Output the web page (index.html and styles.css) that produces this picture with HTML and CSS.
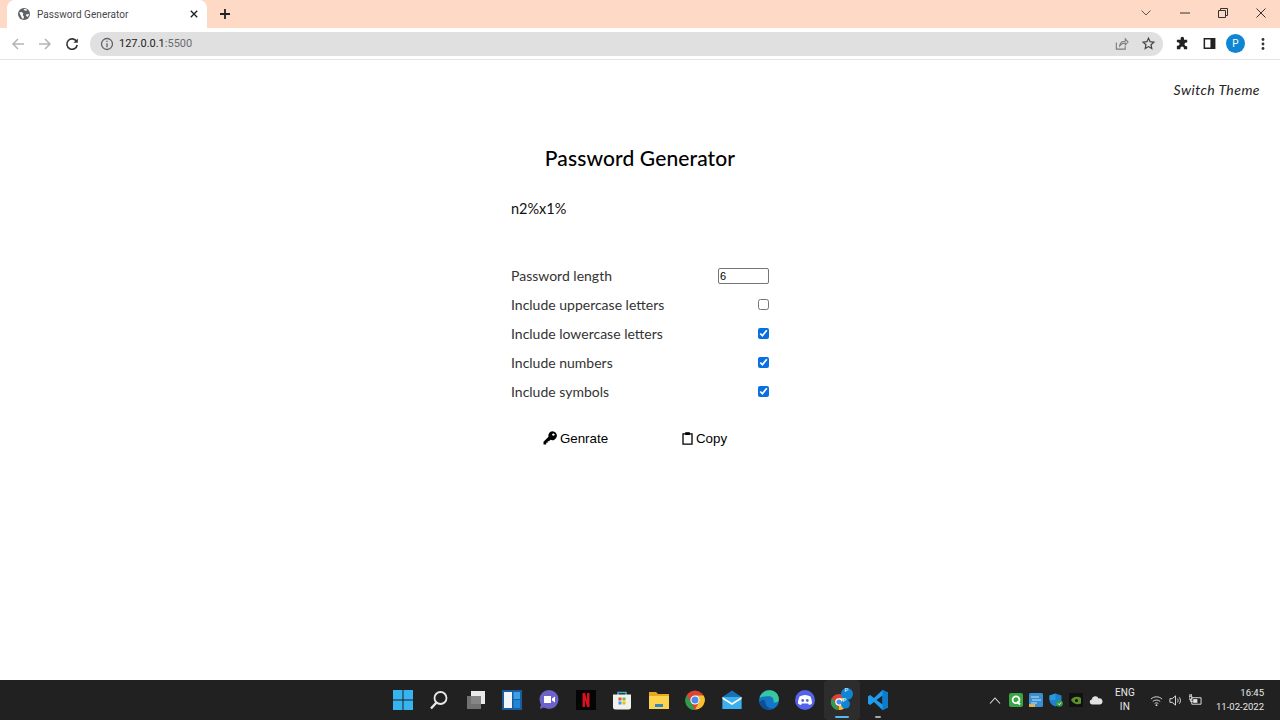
FILE: index.html
```html
<!DOCTYPE html>
<html lang="en">
<head>
<meta charset="utf-8">
<title>Password Generator</title>
<link rel="stylesheet" href="styles.css">
</head>
<body>
<div class="tabstrip">
  <div class="tab">
    <svg class="ic16" viewBox="0 0 16 16"><circle cx="8" cy="8" r="6" fill="#5f6368"/><path d="M3.200 6.500 5.800 6l1.500 1.500-.5 1.800 1 1v2.300L6 12.500l-1-2.500zM7.500 3l1.200 1.500 2 .3.400-1-1.600-.9zM10 8.500l2.600-.6.500.6-1.500 2.500-1.400-.9z" fill="#fff"/></svg>
    <span class="tabtitle">Password Generator</span>
    <svg class="tabclose" viewBox="0 0 10 10"><path d="M1 1l8 8M9 1l-8 8" stroke="#202124" stroke-width="1.700"/></svg>
  </div>
  <svg class="newtab" viewBox="0 0 12 12"><path d="M6 1v10M1 6h10" stroke="#202124" stroke-width="1.800"/></svg>
  <div class="winctl">
    <svg class="chev" viewBox="0 0 10 6"><path d="M.5.500 5 5 9.500.500" fill="none" stroke="#5f5550" stroke-width="1"/></svg>
    <svg class="wbtn" viewBox="0 0 10 10"><path d="M0 5h10" stroke="#333" stroke-width="1"/></svg>
    <svg class="wbtn" viewBox="0 0 10 10"><path d="M.5 2.500h7v7h-7zM2.500 2.500v-2h7v7h-2" fill="none" stroke="#333" stroke-width="1"/></svg>
    <svg class="wbtn" viewBox="0 0 10 10"><path d="M.5.500l9 9M9.500.500l-9 9" stroke="#333" stroke-width="1"/></svg>
  </div>
</div>
<div class="toolbar">
  <svg class="navbtn" viewBox="0 0 14 14"><path d="M13 7H2M7 2 2 7l5 5" fill="none" stroke="#b4b4b4" stroke-width="1.500"/></svg>
  <svg class="navbtn" viewBox="0 0 14 14"><path d="M1 7h11M7 2l5 5-5 5" fill="none" stroke="#b4b4b4" stroke-width="1.500"/></svg>
  <svg class="navbtn" viewBox="0 0 14 14"><path d="M11.600 4.500A5.200 5.200 0 1 0 12.200 8" fill="none" stroke="#333" stroke-width="1.600"/><path d="M12.800 1.500v4.300H8.500z" fill="#333"/></svg>
  <div class="omnibox">
    <svg class="info" viewBox="0 0 14 14"><circle cx="7" cy="7" r="5.500" fill="none" stroke="#5f6368" stroke-width="1.300"/><path d="M7 6.200v4M7 3.800v1.300" stroke="#5f6368" stroke-width="1.300"/></svg>
    <span class="url">127.0.0.1<span class="port">:5500</span></span>
    <svg class="omni-r share" viewBox="0 0 16 16"><path d="M2.500 7v7h9.500v-3" fill="none" stroke="#7b7b7b" stroke-width="1.200"/><path d="M6 10.500c.3-3 2.500-5 6-5V3l3 3.500L12 9.500V7.500c-2.500 0-4.500 1-6 3z" fill="none" stroke="#7b7b7b" stroke-width="1.100"/></svg>
    <svg class="omni-r star" viewBox="0 0 16 16"><path d="m8 2.300 1.700 3.800 4 .5-3 2.700.8 4.100L8 11.300l-3.500 2.100.8-4.100-3-2.700 4-.5z" fill="none" stroke="#444" stroke-width="1.300"/></svg>
  </div>
  <svg class="tool" viewBox="0 0 16 16"><path d="M6 2.500a1.800 1.800 0 0 1 3.600 0V4h3.400v3h-1a1.900 1.900 0 0 0 0 3.800h1V14H9.500v-1a1.900 1.900 0 0 0-3.800 0v1H2v-3.500h1a1.900 1.900 0 0 0 0-3.800H2V4h4z" fill="#222"/></svg>
  <svg class="tool" viewBox="0 0 16 16"><path d="M2.500 3h11v10h-11z" fill="#fff" stroke="#222" stroke-width="1.600"/><path d="M9 3h4.500v10H9z" fill="#222"/></svg>
  <span class="avatar">P</span>
  <svg class="menu" viewBox="0 0 4 14"><circle cx="2" cy="2.500" r="1.400" fill="#333"/><circle cx="2" cy="7" r="1.400" fill="#333"/><circle cx="2" cy="11.500" r="1.400" fill="#333"/></svg>
</div>
<main class="page">
  <div class="theme-row"><span class="theme">Switch Theme</span></div>
  <section class="card">
    <h1 class="title">Password Generator</h1>
    <div class="result">n2%x1%</div>
    <div class="opts">
      <label class="opt"><span>Password length</span><input class="num" type="text" value="6"></label>
      <label class="opt"><span>Include uppercase letters</span><input class="chk" type="checkbox"></label>
      <label class="opt"><span>Include lowercase letters</span><input class="chk" type="checkbox" checked></label>
      <label class="opt"><span>Include numbers</span><input class="chk" type="checkbox" checked></label>
      <label class="opt"><span>Include symbols</span><input class="chk" type="checkbox" checked></label>
    </div>
    <div class="actions">
      <button class="act" type="button"><svg class="key" viewBox="0 0 14 14"><path d="M9.300.200a4.500 4.500 0 1 1-1.800 8.600L6 10.300H4.700v1.500H3.200v1.700H.500v-2.800l5-5A4.500 4.500 0 0 1 9.300.200z" fill="#000"/><circle cx="10.400" cy="3.600" r="1.200" fill="#fff"/></svg>Genrate</button>
      <button class="act" type="button"><svg class="clip" viewBox="0 0 11 14"><path d="M1 2.800h9v10.400H1z" fill="none" stroke="#000" stroke-width="1.300"/><path d="M3.200 1.200h4.600v2.800H3.200z" fill="#000"/></svg>Copy</button>
    </div>
  </section>
</main>
<footer class="taskbar">
  <div class="apps">
    <span class="app"><svg viewBox="0 0 20 20"><path d="M0 0h9.500v9.500H0zM10.500 0H20v9.500h-9.500zM0 10.500h9.500V20H0zM10.500 10.500H20V20h-9.500z" fill="#35b4f0"/></svg></span>
    <span class="app"><svg viewBox="0 0 20 20"><circle cx="11.500" cy="8" r="6" fill="none" stroke="#e8e8e8" stroke-width="1.800"/><path d="M7.500 12.500 2 18.500" stroke="#e8e8e8" stroke-width="2.400"/></svg></span>
    <span class="app"><svg viewBox="0 0 20 20"><path d="M5 1h14v13H5z" fill="#e9e9e9"/><path d="M1 6h14v13H1z" fill="#7a7a7a" opacity=".9"/></svg></span>
    <span class="app"><svg viewBox="0 0 20 20"><path d="M0 0h20v20H0z" fill="#1a5c9e"/><path d="M2 2h8v16H2z" fill="#f2f6fa"/><path d="M11.500 2H18v7h-6.500z" fill="#3aa0e8"/><path d="M11.500 10H18v8h-6.500z" fill="#1f86d6"/></svg></span>
    <span class="app"><svg viewBox="0 0 20 20"><circle cx="10" cy="9.500" r="9.500" fill="#6b63c8"/><path d="M2 14l-1 5 5-2z" fill="#6b63c8"/><path d="M5 6h7v7H5z" fill="#fff"/><path d="m13 8.500 3-2v6l-3-2z" fill="#fff"/></svg></span>
    <span class="app"><svg viewBox="0 0 20 20"><path d="M0 0h20v20H0z" fill="#050505"/><path d="M6.500 3h2.500l2 7V3h2.500v14H11L9 10v7H6.500z" fill="#d81020"/></svg></span>
    <span class="app"><svg viewBox="0 0 20 20"><path d="M6 5V2.500h8V5" fill="none" stroke="#3fb6c9" stroke-width="1.500"/><path d="M1 4.500h18V17a2.500 2.500 0 0 1-2.500 2.500h-13A2.500 2.500 0 0 1 1 17z" fill="#f1f1ef"/><path d="M6.500 7.500h3v3h-3z" fill="#e9512a"/><path d="M10.500 7.500h3v3h-3z" fill="#7eb92f"/><path d="M6.500 11.500h3v3h-3z" fill="#2ea4e8"/><path d="M10.500 11.500h3v3h-3z" fill="#f6b912"/></svg></span>
    <span class="app"><svg viewBox="0 0 20 20"><path d="M0 2h7l2 2h11v4H0z" fill="#e8a91f"/><path d="M0 6h20v13H0z" fill="#fcd34f"/><path d="M6 14h8v3H6z" fill="#2f86c9"/></svg></span>
    <span class="app"><svg viewBox="0 0 20 20"><circle cx="10" cy="10" r="9.500" fill="#db4437"/><path d="M10 20a9.500 9.500 0 0 1-8.200-14.700L6 12.500z" fill="#2e9c4c"/><path d="M10 5.500h8.700A9.500 9.500 0 0 1 10 19.500l4-7z" fill="#f7c02c"/><circle cx="10" cy="10" r="4.600" fill="#fff"/><circle cx="10" cy="10" r="3.500" fill="#4a8cf0"/></svg></span>
    <span class="app"><svg viewBox="0 0 20 20"><path d="M10 .500 19.500 7v12H.500V7z" fill="#1b6fb5"/><path d="M.5 7H19.500v12H.5z" fill="#3ab0ee"/><path d="M.5 7 10 13l9.500-6v2L10 15 .5 9z" fill="#fff"/></svg></span>
    <span class="app"><svg viewBox="0 0 20 20"><circle cx="10" cy="10" r="10" fill="#1475c6"/><path d="M.5 8C2 2 9-1.500 15 1.200c3.500 1.800 5.200 5.200 4.800 8.800-.3 2.300-2.800 3-5.300 2.200.8-3-1.200-6-4.500-6C6 6.200 3 6.500.5 8z" fill="#37c8a0"/><path d="M6.500 12.500c0 3.500 3.300 6.500 7.500 6-4.500 2.700-11.500.8-13.300-6C2.500 9 5.500 8.500 6.500 12.500z" fill="#0d4f96"/></svg></span>
    <span class="app"><svg viewBox="0 0 20 20"><circle cx="10" cy="10" r="10" fill="#5562ea"/><path d="M4.500 6.500C8 4.500 12 4.500 15.500 6.500c1 2.300 1.500 4.500 1.500 7-1 .8-2 1.200-3 1.500l-.8-1.500H6.800L6 15c-1-.3-2-.7-3-1.500 0-2.500.5-4.700 1.500-7z" fill="#fff"/><circle cx="7.700" cy="10.500" r="1.400" fill="#5562ea"/><circle cx="12.300" cy="10.500" r="1.400" fill="#5562ea"/></svg></span>
    <span class="app active"><svg viewBox="0 0 24 24"><circle cx="9" cy="14" r="8" fill="#db4437"/><path d="M9 22a8 8 0 0 1-7-12l4 6z" fill="#2e9c4c"/><path d="M9 22a8 8 0 0 0 7-12H9z" fill="#f7c02c"/><circle cx="9" cy="14" r="3.200" fill="#4a8cf0" stroke="#fff" stroke-width="1.200"/><circle cx="17" cy="6" r="6" fill="#0e86d4"/><circle cx="15.500" cy="16" r="4.500" fill="#0e86d4"/></svg><i class="badge b1">P</i><i class="badge b2">P</i><i class="run on"></i></span>
    <span class="app"><svg viewBox="0 0 20 20"><path d="M14.500 0 20 2.500v15L14.500 20 6 12l-3.800 3L0 13.800V6.200L2.200 5 6 8z" fill="#1f9cf0"/><path d="M14.500 5.500 8.500 10l6 4.500z" fill="#222"/><path d="M14.500 0 20 2.500v15L14.500 20z" fill="#0a7cc9"/></svg><i class="run"></i></span>
  </div>
  <div class="tray">
    <svg class="tri up" viewBox="0 0 12 7"><path d="M1 6.500 6 1l5 5.500" fill="none" stroke="#ddd" stroke-width="1.100"/></svg>
    <span class="tri"><svg viewBox="0 0 14 14"><rect width="14" height="14" rx="2" fill="#3aa545"/><circle cx="7" cy="6.800" r="3.400" fill="none" stroke="#fff" stroke-width="1.800"/><path d="m8 8.500 3 3" stroke="#fff" stroke-width="1.800"/></svg></span>
    <span class="tri"><svg viewBox="0 0 14 14"><rect width="14" height="14" rx="1.500" fill="#3a8fd0"/><path d="M2 4h8M3 7h9M2 10h6" stroke="#bfe3f7" stroke-width="1"/><path d="M0 11h6v3H0z" fill="#d9b45a"/></svg></span>
    <span class="tri"><svg viewBox="0 0 14 14"><path d="M6.500.500 12.500 2.500V7c0 3-2.500 5.500-6 6.500C3 12.500.5 10 .5 7V2.500z" fill="#1f7fd0"/><path d="M6.500.500V7H.5V2.500z" fill="#2a9ad8"/><circle cx="10.500" cy="10.500" r="3.300" fill="#2f9e44"/><path d="m9 10.500 1.200 1.200 2-2.200" stroke="#fff" stroke-width=".9" fill="none"/></svg></span>
    <span class="tri"><svg viewBox="0 0 14 14"><path d="M0 0h14v14H0z" fill="#111"/><path d="M2 7c2-3.500 7-4 10-2v5.500c-3 1.500-7.500 1-10-3.500z" fill="#5f8f28"/><circle cx="7.500" cy="7.500" r="1.500" fill="#111"/></svg></span>
    <span class="tri"><svg viewBox="0 0 14 14"><path d="M3 11.500a2.600 2.600 0 0 1-.3-5.100 3.600 3.600 0 0 1 6.900-1 3 3 0 0 1 1.500 6.100z" fill="#e2e2e2"/></svg></span>
    <span class="lang"><span>ENG</span><span>IN</span></span>
    <svg class="sys wifi" viewBox="0 0 14 14"><path d="M1 5.500c3.500-3.300 8.500-3.300 12 0M3 8c2.300-2 5.700-2 8 0M5 10.300c1.200-1 2.800-1 4 0" fill="none" stroke="#e4e4e4" stroke-width="1"/><circle cx="7" cy="12" r="1" fill="#e4e4e4"/></svg>
    <svg class="sys" viewBox="0 0 14 14"><path d="M1 5h2.500L7 2v10L3.500 9H1z" fill="none" stroke="#e4e4e4" stroke-width="1"/><path d="M9 5c1 1.200 1 2.800 0 4M11 3.500c1.800 2 1.800 5 0 7" fill="none" stroke="#e4e4e4" stroke-width="1"/></svg>
    <svg class="sys" viewBox="0 0 14 14"><path d="M3 4h10v7H3z" fill="none" stroke="#e4e4e4" stroke-width="1"/><path d="M4.500 5.500H9v4H4.500z" fill="#e4e4e4"/><path d="M0 2.500h3v3H0zM1 0v2.500M2.500 0v2.500M1.500 5.500V8H4" stroke="#e4e4e4" stroke-width="1" fill="none"/></svg>
    <span class="clock"><span>16:45</span><span>11-02-2022</span></span>
  </div>
</footer>
</body>
</html>
```
FILE: styles.css
```css
* { box-sizing: border-box; }
html, body { margin: 0; height: 720px; overflow: hidden; }
body { display: flex; flex-direction: column; background: #fff; font-family: "Lato", "Noto Sans", sans-serif; color: #111; }

.tabstrip { height: 28px; flex: none; background: #fdd9c6; display: flex; align-items: stretch; padding-left: 7px; }
.tab { width: 200px; background: #fff; border-radius: 8px 8px 0 0; display: flex; align-items: center; padding: 0 8px 0 9px; }
.ic16 { width: 16px; height: 16px; flex: none; }
.tabtitle { font: 10px "Roboto", sans-serif; letter-spacing: .05px; color: #45484c; margin-left: 5px; flex: 1; }
.tabclose { width: 8px; height: 8px; flex: none; margin-right: 1px; }
.newtab { width: 12px; height: 12px; align-self: center; margin-left: 12px; flex: none; }
.winctl { margin-left: auto; display: flex; align-items: center; padding-right: 14px; gap: 28px; }
.chev { width: 10px; height: 6px; margin-top: -3px; margin-right: 1px; }
.wbtn { width: 10px; height: 10px; margin-top: -3px; }

.toolbar { height: 32px; flex: none; background: #fff; border-bottom: 1px solid #e4e4e4; display: flex; align-items: center; padding: 0 13px 0 11px; }
.navbtn { width: 14px; height: 14px; margin-right: 13px; flex: none; }
.navbtn:nth-child(3) { margin-right: 11px; }
.omnibox { width: 1073px; height: 24px; background: #e0e0e0; border-radius: 12px; display: flex; align-items: center; padding: 0 7px 0 10px; flex: none; }
.info { width: 14px; height: 14px; flex: none; }
.url { font: 11px "Roboto", sans-serif; color: #202124; margin-left: 5px; flex: 1; }
.port { color: #6a6c70; }
.omni-r { width: 15px; height: 15px; flex: none; }
.share { margin-right: 12px; }
.tool { width: 15px; height: 15px; flex: none; margin-left: 12px; }
.tool:first-of-type { margin-left: 9px; }
.avatar { width: 19px; height: 19px; border-radius: 50%; background: #0e86d4; color: #fff; font: 10px/19px "Roboto", sans-serif; text-align: center; margin-left: 9px; flex: none; }
.menu { width: 4px; height: 14px; margin-left: 16px; flex: none; }

.page { flex: 1; padding-top: 21px; min-height: 0; }
.theme-row { display: flex; justify-content: flex-end; padding-right: 20px; height: 18px; }
.theme { font-size: 14px; font-style: italic; line-height: 18px; color: #222; letter-spacing: .45px; }
.card { width: 258px; margin: 0 auto; padding-top: 46px; }
.title { margin: 0; text-align: center; font-size: 21px; font-weight: 500; letter-spacing: .12px; line-height: 26px; white-space: nowrap; color: #000; }
.result { margin-top: 27px; font-size: 14.500px; line-height: 22px; height: 22px; }
.opts { margin-top: 41px; display: flex; flex-direction: column; }
.opt { height: 29.100px; display: flex; align-items: center; justify-content: space-between; font-size: 14px; color: #333; }
.num { width: 51px; height: 16px; border: 1px solid #767676; border-radius: 2px; padding: 0 1px; font: 11px "Liberation Sans", sans-serif; color: #000; background: #fff; margin: 0; }
.chk { width: 11px; height: 11px; margin: 0 0 1px; accent-color: #0a6fe0; }
.actions { margin-top: 16px; display: flex; }
.act { flex: 1; height: 32px; border: 0; background: none; padding: 0; display: flex; align-items: center; justify-content: center; gap: 3px; font: 13.330px "Liberation Sans", sans-serif; color: #000; }
.key { width: 14px; height: 14px; }
.clip { width: 11px; height: 14px; }

.taskbar { height: 40px; flex: none; background: #212121; position: relative; display: flex; align-items: center; justify-content: flex-end; }
.apps { position: absolute; left: 384.400px; top: 0; height: 40px; display: flex; }
.app { width: 36.600px; height: 40px; display: flex; align-items: center; justify-content: center; position: relative; }
.app svg { width: 20px; height: 20px; }
.app.active { background: #2d2d2d; border-radius: 4px; }
.app.active svg { width: 24px; height: 24px; }
.badge { position: absolute; color: #fff; font: normal 6px "Roboto", sans-serif; }
.b1 { left: 21px; top: 6px; }
.b2 { left: 19px; top: 16px; }
.run { position: absolute; left: 50%; bottom: 2px; width: 6px; height: 2px; margin-left: -3px; background: #a8a8a8; border-radius: 1px; }
.run.on { width: 14px; margin-left: -7px; background: #5cb8ec; }
.tray { display: flex; align-items: center; padding-right: 16px; }
.tri { width: 14px; height: 14px; display: flex; margin-right: 6px; }
.tri svg { width: 14px; height: 14px; }
.up { width: 12px; height: 7px; margin-right: 8px; }
.lang { width: 26px; margin: 0 12px 0 3px; display: flex; flex-direction: column; align-items: center; font: 10px/14px "Roboto", sans-serif; color: #e8e8e8; letter-spacing: .2px; }
.sys { width: 13px; height: 13px; margin-right: 7px; }
.wifi { margin-right: 6px; }
.clock { width: 50px; margin-left: 5px; display: flex; flex-direction: column; align-items: flex-end; font: 9.500px/14px "Roboto", sans-serif; color: #e8e8e8; white-space: nowrap; }
```
